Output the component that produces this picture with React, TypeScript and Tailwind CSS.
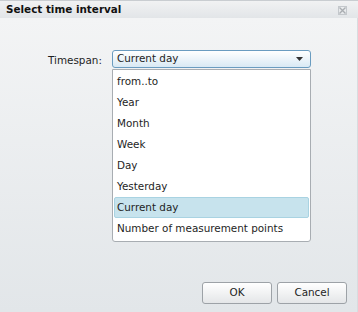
import React, { useState } from 'react';

const options = [
  'from..to',
  'Year',
  'Month',
  'Week',
  'Day',
  'Yesterday',
  'Current day',
  'Number of measurement points',
];

const App: React.FC = () => {
  const [selected, setSelected] = useState('Current day');

  return (
    <div
      className="w-[358px] h-[312px] flex flex-col border-t border-[#c9cdd1] text-[10.4px] text-[#1e1e1e] overflow-hidden"
      style={{ fontFamily: '"DejaVu Sans", Verdana, sans-serif' }}
    >
      {/* title bar */}
      <div className="h-[17px] flex items-center justify-between pl-[6px] pr-[11px] bg-gradient-to-b from-[#f1f2f3] to-[#e2e5e8]">
        <span className="font-bold text-[10.4px] text-[#111]">Select time interval</span>
        <svg width="9" height="9" viewBox="0 0 9 9" className="mt-[1px]">
          <rect x="0.5" y="0.5" width="8" height="8" fill="none" stroke="#c4c8cc" />
          <path d="M1.5 1.5l6 6M7.5 1.5l-6 6" stroke="#a9adb1" strokeWidth="1.4" />
        </svg>
      </div>

      {/* body */}
      <div className="flex-1 flex flex-col bg-gradient-to-b from-[#f3f4f5] to-[#e2e6e9] border-r border-[#d8dcdf]">
        <div className="flex items-start pt-[32px] pl-[48px]">
          <label className="mt-[3px] w-[64px]">Timespan:</label>
          <div className="w-[199px] flex flex-col">
            <div className="h-[18px] flex items-center justify-between pl-[4px] pr-[7px] rounded-[3px] border border-[#6a9cc0] bg-gradient-to-b from-[#ffffff] to-[#d9e9f4]">
              <span>{selected}</span>
              <svg width="7" height="4" viewBox="0 0 7 4">
                <path d="M0 0h7L3.5 4z" fill="#333" />
              </svg>
            </div>
            <ul className="mt-[1px] bg-white border border-[#a8adb2] rounded-b-[3px] pt-[1px] pb-[2px] px-[1px]">
              {options.map((o) => (
                <li
                  key={o}
                  onClick={() => setSelected(o)}
                  className={
                    o === selected
                      ? 'h-[21px] flex items-center pl-[2px] bg-[#c7e3ed] border border-[#a9d3e2] rounded-[2px]'
                      : 'h-[21px] flex items-center pl-[2px] border border-transparent'
                  }
                >
                  {o}
                </li>
              ))}
            </ul>
          </div>
        </div>

        <div className="mt-auto mb-[8px] flex justify-end gap-[5px] pr-[10px]">
          <button className="w-[70px] h-[22px] rounded-[3px] border border-[#9da2a7] bg-gradient-to-b from-[#ffffff] to-[#e4e6e8] text-[10.4px]">
            OK
          </button>
          <button className="w-[70px] h-[22px] rounded-[3px] border border-[#9da2a7] bg-gradient-to-b from-[#ffffff] to-[#e4e6e8] text-[10.4px]">
            Cancel
          </button>
        </div>
      </div>
    </div>
  );
};

export default App;
